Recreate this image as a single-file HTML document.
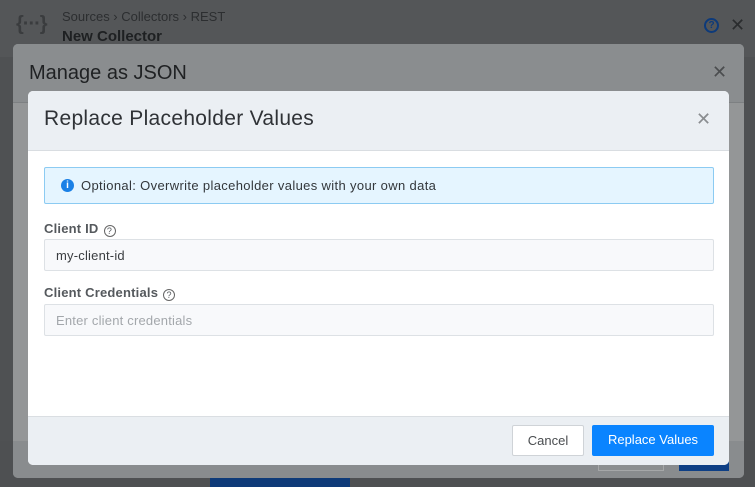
<!DOCTYPE html>
<html><head><style>
*{box-sizing:border-box;margin:0;padding:0}
body{width:755px;height:487px;overflow:hidden;background:#4f5153;font-family:"Liberation Sans","DejaVu Sans",sans-serif;position:relative}
.top{position:absolute;left:0;top:0;width:755px;height:57px;background:#545658}
.abs{position:absolute}
.outer{position:absolute;left:13px;top:44px;width:731px;height:434px;border-radius:5px;background:#949697;overflow:hidden}
.outer .hd{height:59px;background:#8a8d8f;border-bottom:1px solid #7d8082}
.outer .ft{position:absolute;left:0;bottom:0;width:100%;height:37px;background:#898c8e}
.inner{position:absolute;left:28px;top:91px;width:701px;height:374px;border-radius:5px;background:#fff;overflow:hidden}
.inner .hd{height:60px;background:#ebeff3;border-bottom:1px solid #d9dde1;padding:16px 16px;font-size:21px;letter-spacing:0.3px;color:#2f3236}
.inner .ft{position:absolute;left:0;bottom:0;width:100%;height:49px;background:#ebeff3;border-top:1px solid #dadee2}
.info{position:absolute;left:16px;top:76px;width:670px;height:37px;background:#e5f5ff;border:1px solid #8ccbf2;border-radius:2px;font-size:13px;letter-spacing:0.35px;color:#33373b;padding:10px 0 0 36px}
.dot{position:absolute;left:16px;top:11px;width:13px;height:13px;border-radius:50%;background:#1a80e6;color:#fff;font-size:10px;font-weight:bold;text-align:center;line-height:13px;letter-spacing:0}
.lbl{position:absolute;left:16px;font-size:13px;font-weight:bold;color:#55595d;letter-spacing:0.2px}
.q{display:inline-block;width:12px;height:12px;border:1px solid #666;border-radius:50%;font-size:9px;line-height:10px;text-align:center;font-weight:normal;margin-left:5px;vertical-align:-1px}
.inp{position:absolute;left:16px;width:670px;height:32px;border:1px solid #dde1e5;background:#f8f9fb;border-radius:2px;font-size:13px;padding:8px 11px;color:#3a3d40;letter-spacing:0.2px}
.btn{position:absolute;top:334px;height:31px;border-radius:2px;font-size:13px;text-align:center;line-height:29px}
</style></head><body>
<div class="top"></div>
<div class="abs" style="left:16px;top:13px;font-size:20px;color:#3a3c3e;font-weight:bold;letter-spacing:-1px">{···}</div>
<div class="abs" style="left:62px;top:9px;font-size:13px;color:#2c2e30">Sources › Collectors › REST</div>
<div class="abs" style="left:62px;top:28px;font-size:15px;font-weight:bold;color:#1e2022">New Collector</div>
<div class="abs" style="left:704px;top:18px;width:15px;height:15px;border:2px solid #0d3a7a;border-radius:50%;font-size:10px;font-weight:bold;color:#0d3a7a;text-align:center;line-height:11px">?</div>
<div class="abs" style="left:730px;top:15px;font-size:18px;color:#2a2c2e">✕</div>
<div class="abs" style="left:0;top:441px;width:755px;height:46px;background:#4e5052"></div>
<div class="abs" style="left:210px;top:478px;width:140px;height:9px;background:#0e3a78"></div>
<div class="outer"><div class="hd"></div><div class="ft"></div></div>
<div class="abs" style="left:29px;top:62px;font-size:20px;color:#1f2123">Manage as JSON</div>
<div class="abs" style="left:712px;top:62px;font-size:18px;color:#4b4d4f">✕</div>
<div class="abs" style="left:598px;top:455px;width:66px;height:16px;background:#8c8f90;border:1px solid #a5a7a8"></div>
<div class="abs" style="left:679px;top:455px;width:50px;height:16px;background:#0e3f85"></div>
<div class="inner">
<div class="hd">Replace Placeholder Values</div>
<div class="abs" style="left:668px;top:18px;font-size:18px;color:#8a8d90">✕</div>
<div class="info"><div class="dot">i</div>Optional: Overwrite placeholder values with your own data</div>
<div class="lbl" style="top:130px">Client ID<span class="q">?</span></div>
<div class="inp" style="top:148px">my-client-id</div>
<div class="lbl" style="top:194px">Client Credentials<span class="q">?</span></div>
<div class="inp" style="top:213px;color:#a3a7ab">Enter client credentials</div>
<div class="ft"></div>
<div class="btn" style="left:484px;width:72px;background:#fff;border:1px solid #cfd3d7;color:#4a4d50">Cancel</div>
<div class="btn" style="left:564px;width:122px;background:#0a84ff;color:#fff">Replace Values</div>
</div>
</body></html>
